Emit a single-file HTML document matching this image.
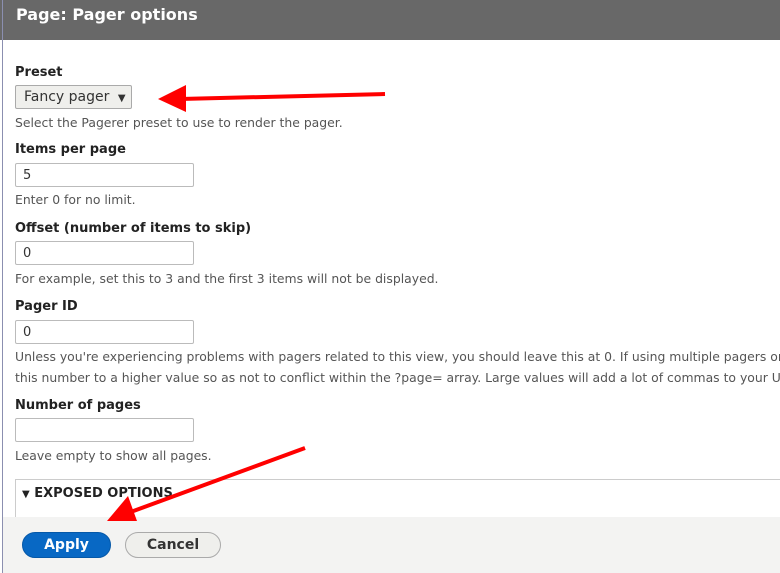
<!DOCTYPE html><html><head><style>
body{margin:0;width:780px;height:573px;overflow:hidden;background:#fff;font-family:"DejaVu Sans","Liberation Sans",sans-serif;color:#333;position:relative}
.hdr{position:absolute;left:0;top:0;width:780px;height:40px;background:#686868;color:#fff;font-weight:bold;font-size:16px;line-height:30px;padding-left:16px;box-sizing:border-box}
.lb{position:absolute;left:2px;top:0;width:1px;height:573px;background:#8b8fb0}
.l{position:absolute;left:15px;font-weight:bold;font-size:13px;color:#222}
.d{position:absolute;left:15px;font-size:12.4px;color:#555;white-space:nowrap}
.i{position:absolute;left:15px;width:179px;height:24px;border:1px solid #bbb;border-radius:2px;font-size:13px;line-height:23px;padding-left:7px;box-sizing:border-box;background:#fff}
.foot{position:absolute;left:3px;top:517px;width:777px;height:56px;background:#f3f3f2}
.btn{position:absolute;top:532px;height:26px;border-radius:14px;font-weight:bold;font-size:14px;line-height:25px;text-align:center;box-sizing:border-box}
</style></head><body>
<div class="hdr">Page: Pager options</div>
<div class="lb"></div>
<div class="l" style="top:65px">Preset</div>
<div style="position:absolute;left:15px;top:85px;width:117px;height:24px;border:1px solid #aaa;border-radius:2px;background:#efefec;font-size:14px;line-height:22px;padding-left:8px;box-sizing:border-box">Fancy pager <span style="font-size:10px;margin-left:4px">▼</span></div>
<div class="d" style="top:115px">Select the Pagerer preset to use to render the pager.</div>
<div class="l" style="top:142px">Items per page</div>
<div class="i" style="top:163px">5</div>
<div class="d" style="top:192px">Enter 0 for no limit.</div>
<div class="l" style="top:221px">Offset (number of items to skip)</div>
<div class="i" style="top:241px">0</div>
<div class="d" style="top:271px">For example, set this to 3 and the first 3 items will not be displayed.</div>
<div class="l" style="top:299px">Pager ID</div>
<div class="i" style="top:320px">0</div>
<div class="d" style="top:349px">Unless you're experiencing problems with pagers related to this view, you should leave this at 0. If using multiple pagers on</div>
<div class="d" style="top:370px">this number to a higher value so as not to conflict within the ?page= array. Large values will add a lot of commas to your UR</div>
<div class="l" style="top:398px">Number of pages</div>
<div class="i" style="top:418px"></div>
<div class="d" style="top:448px">Leave empty to show all pages.</div>
<div style="position:absolute;left:15px;top:479px;width:780px;height:60px;border:1px solid #ccc;box-sizing:border-box"></div>
<div class="l" style="top:486px;left:22px"><span style="font-size:10px">▼</span> EXPOSED OPTIONS</div>
<div class="foot"></div>
<div class="btn" style="left:22px;width:89px;background:#0868c4;color:#fff;border:1px solid #0558a8">Apply</div>
<div class="btn" style="left:125px;width:96px;background:#efefec;color:#333;border:1px solid #aaa">Cancel</div>
<svg style="position:absolute;left:0;top:0" width="780" height="573">
<line x1="385" y1="94" x2="180" y2="99" stroke="#f00" stroke-width="4"/>
<polygon points="158,99 186,85 186,112" fill="#f00"/>
<line x1="305" y1="448" x2="128" y2="513" stroke="#f00" stroke-width="4"/>
<polygon points="107,521 128,496 137,521" fill="#f00"/>
</svg>
</body></html>
